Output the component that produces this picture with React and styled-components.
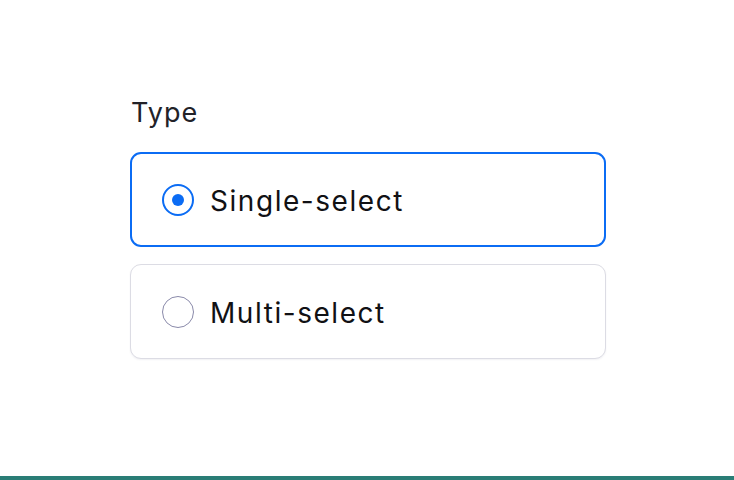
import React, { useState } from "react";
import styled, { createGlobalStyle } from "styled-components";

const GlobalStyle = createGlobalStyle`
  html, body {
    margin: 0;
    padding: 0;
    background: #ffffff;
  }
  body {
    font-family: Inter, "Noto Sans", sans-serif;
  }
`;

const Page = styled.div`
  height: 480px;
  display: flex;
  flex-direction: column;
  box-sizing: border-box;
  border-bottom: 4px solid #2a7d76;
`;

const Field = styled.fieldset`
  border: none;
  margin: 0;
  padding: 96px 0 0 130px;
  width: 476px;
  display: flex;
  flex-direction: column;
`;

const Legend = styled.div`
  font-size: 27px;
  line-height: 34px;
  letter-spacing: 1px;
  color: #222228;
  margin-bottom: 22px;
  padding-left: 1px;
`;

const Options = styled.div`
  display: flex;
  flex-direction: column;
  gap: 17px;
`;

const Option = styled.label`
  box-sizing: border-box;
  height: 95px;
  display: flex;
  align-items: center;
  gap: 16px;
  padding-left: ${(p) => (p.$checked ? "30px" : "31px")};
  border-radius: 11px;
  border: ${(p) => (p.$checked ? "2px solid #0b6cf4" : "1px solid #dcdce4")};
  box-shadow: ${(p) => (p.$checked ? "none" : "0 1px 2px rgba(20, 20, 60, 0.06)")};
  cursor: pointer;
  background: #fff;
`;

const Radio = styled.span`
  box-sizing: border-box;
  width: 32px;
  height: 32px;
  border-radius: 50%;
  border: ${(p) => (p.$checked ? "2px solid #0b6cf4" : "1px solid #8a8aaa")};
  display: flex;
  align-items: center;
  justify-content: center;

  &::after {
    content: "";
    width: 12px;
    height: 12px;
    border-radius: 50%;
    background: #0b6cf4;
    display: ${(p) => (p.$checked ? "block" : "none")};
  }
`;

const OptionText = styled.span`
  font-size: 28px;
  letter-spacing: 1.55px;
  color: #111114;
  padding-top: 2px;
`;

const options = ["Single-select", "Multi-select"];

export default function App() {
  const [value, setValue] = useState("Single-select");
  return (
    <>
      <GlobalStyle />
      <Page>
        <Field>
          <Legend>Type</Legend>
          <Options>
            {options.map((o) => (
              <Option key={o} $checked={value === o} onClick={() => setValue(o)}>
                <Radio $checked={value === o} />
                <OptionText>{o}</OptionText>
              </Option>
            ))}
          </Options>
        </Field>
      </Page>
    </>
  );
}
